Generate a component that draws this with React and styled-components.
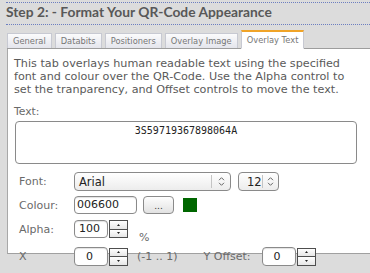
import React from "react";
import styled, { createGlobalStyle } from "styled-components";

const GlobalStyle = createGlobalStyle`
  body {
    margin: 0;
    background: #dcdcdc;
    font-family: "DejaVu Sans", Verdana, sans-serif;
  }
`;

const Page = styled.div`
  width: 370px;
  height: 273px;
  overflow: hidden;
  padding-top: 2px;
  box-sizing: border-box;
`;

const Header = styled.h2`
  margin: 0 0 0 6px;
  height: 21px;
  line-height: 22px;
  border-top: 1px dotted #6d7fc0;
  border-bottom: 1px dotted #6d7fc0;
  font: bold 13.8px Lato, "DejaVu Sans", sans-serif;
  color: #585858;
  white-space: nowrap;
`;

const TabBar = styled.div`
  display: flex;
  align-items: flex-end;
  gap: 3px;
  margin: 7px 0 0 7px;
  height: 16px;
  border-bottom: 1px solid #9d9d9d;
`;

const Tab = styled.div`
  height: ${(p) => (p.$active ? "16px" : "14px")};
  line-height: ${(p) => (p.$active ? "16px" : "14px")};
  padding: 0 5px;
  border: 1px solid #c7c9d2;
  border-top: ${(p) => (p.$active ? "2px solid #f0a428" : "1px solid #c7c9d2")};
  border-bottom: ${(p) => (p.$active ? "1px solid #fff" : "none")};
  margin-bottom: ${(p) => (p.$active ? "-1px" : "0")};
  background: ${(p) =>
    p.$active ? "#fff" : "linear-gradient(#fbfbfc, #e4e5ec)"};
  font-size: 8.3px;
  color: #777;
  white-space: nowrap;
`;

const Panel = styled.div`
  margin-left: 7px;
  height: 205px;
  box-sizing: border-box;
  padding: 8px 10px 0 6px;
  background: #fff;
  border-left: 1px solid #a8a8a8;
  border-bottom: 1px solid #a0a0a0;
`;

const Intro = styled.p`
  margin: 0 0 9px;
  font-size: 11.2px;
  line-height: 13px;
  color: #5a5a5a;
`;

const FieldLabel = styled.div`
  font-size: 10.8px;
  line-height: 13px;
  color: #6a6a6a;
`;

const TextBox = styled.div`
  margin: 3px 0 0 1px;
  width: 342px;
  height: 43px;
  box-sizing: border-box;
  padding-top: 3px;
  border: 1px solid #8a8a8a;
  border-radius: 4px;
  font: 10px "DejaVu Sans Mono", monospace;
  color: #222;
  text-align: center;
`;

const Row = styled.div`
  display: flex;
  align-items: center;
  height: ${(p) => p.$h}px;
  margin-top: ${(p) => p.$top}px;
`;

const Label = styled.span`
  width: 55px;
  padding-left: 5px;
  flex-shrink: 0;
  font-size: 11px;
  color: #6a6a6a;
`;

const Note = styled.span`
  margin-left: ${(p) => p.$left}px;
  font-size: 11px;
  color: #6a6a6a;
  align-self: ${(p) => (p.$low ? "flex-end" : "center")};
  margin-bottom: ${(p) => (p.$low ? "-6px" : "0")};
  white-space: nowrap;
`;

const Select = styled.div`
  display: flex;
  align-items: center;
  width: ${(p) => p.$w}px;
  height: 19px;
  box-sizing: border-box;
  margin-left: ${(p) => p.$left || 0}px;
  border: 1px solid #8a8a8a;
  border-radius: 4px;
  background: linear-gradient(#ffffff, #ececec);
  font-size: 11.5px;
  color: #222;
`;

const SelectValue = styled.span`
  flex: 1;
  padding-left: ${(p) => p.$pad}px;
`;

const SelectArrow = styled.span`
  display: flex;
  align-items: center;
  justify-content: center;
  width: ${(p) => p.$w}px;
  height: 13px;
  border-left: 1px solid #c4c4c4;
`;

const Input = styled.div`
  width: ${(p) => p.$w}px;
  height: ${(p) => p.$h || 18}px;
  box-sizing: border-box;
  margin-left: ${(p) => p.$left || 0}px;
  padding: ${(p) => (p.$center ? "0 3px 0 0" : "0 0 0 2px")};
  border: 1px solid #8a8a8a;
  border-radius: 4px;
  background: #fff;
  box-shadow: inset 0 1px 1px rgba(0, 0, 0, 0.12);
  font-size: 11px;
  line-height: ${(p) => (p.$h || 18) - 2}px;
  color: #222;
  text-align: ${(p) => (p.$center ? "center" : "left")};
`;

const PickButton = styled.div`
  width: 31px;
  height: 18px;
  box-sizing: border-box;
  margin-left: 6px;
  border: 1px solid #8a8a8a;
  border-radius: 4px;
  background: linear-gradient(#fdfdfd, #e2e2e2);
  font-size: 9px;
  line-height: 18px;
  color: #333;
  text-align: center;
`;

const Swatch = styled.div`
  width: 14px;
  height: 14px;
  margin-left: 9px;
  background: ${(p) => p.$color};
`;

const Spinner = styled.div`
  display: flex;
  flex-direction: column;
  width: 19px;
  height: 18px;
  margin-left: 1px;
`;

const SpinButton = styled.div`
  flex: 1;
  display: flex;
  align-items: center;
  justify-content: center;
  border: 1px solid #4e4e4e;
  background: linear-gradient(#ffffff, #e6e6e6);
  & + & {
    border-top: none;
  }
`;

const Chevrons = () => (
  <svg width="7" height="11" viewBox="0 0 7 11">
    <path d="M1 4.2 L3.5 1.7 L6 4.2 M1 6.8 L3.5 9.3 L6 6.8" fill="none" stroke="#666" strokeWidth="1" />
  </svg>
);

const Tri = ({ down }) => (
  <svg width="3" height="2" viewBox="0 0 3 2">
    <path d={down ? "M0 0 H3 L1.5 2 Z" : "M0 2 H3 L1.5 0 Z"} fill="#222" />
  </svg>
);

const Spin = () => (
  <Spinner>
    <SpinButton>
      <Tri />
    </SpinButton>
    <SpinButton>
      <Tri down />
    </SpinButton>
  </Spinner>
);

const tabs = ["General", "Databits", "Positioners", "Overlay Image", "Overlay Text"];

export default function App() {
  return (
    <Page>
      <GlobalStyle />
      <Header>Step 2: - Format Your QR-Code Appearance</Header>
      <TabBar>
        {tabs.map((t) => (
          <Tab key={t} $active={t === "Overlay Text"}>
            {t}
          </Tab>
        ))}
      </TabBar>
      <Panel>
        <Intro>
          This tab overlays human readable text using the specified font and
          colour over the QR-Code. Use the Alpha control to set the
          tranparency, and Offset controls to move the text.
        </Intro>
        <FieldLabel>Text:</FieldLabel>
        <TextBox>3S59719367898064A</TextBox>

        <Row $h={19} $top={8}>
          <Label>Font:</Label>
          <Select $w={157}>
            <SelectValue $pad={4}>Arial</SelectValue>
            <SelectArrow $w={18}>
              <Chevrons />
            </SelectArrow>
          </Select>
          <Select $w={41} $left={7}>
            <SelectValue $pad={8}>12</SelectValue>
            <SelectArrow $w={16}>
              <Chevrons />
            </SelectArrow>
          </Select>
        </Row>

        <Row $h={18} $top={5}>
          <Label>Colour:</Label>
          <Input $w={63}>006600</Input>
          <PickButton>...</PickButton>
          <Swatch $color="#006600" />
        </Row>

        <Row $h={18} $top={6}>
          <Label>Alpha:</Label>
          <Input $w={34} $center>
            100
          </Input>
          <Spin />
          <Note $left={11} $low>
            %
          </Note>
        </Row>

        <Row $h={19} $top={9}>
          <Label>X</Label>
          <Input $w={34} $h={19} $center>
            0
          </Input>
          <Spin />
          <Note $left={9}>(-1 .. 1)</Note>
          <Note $left={26}>Y Offset:</Note>
          <Input $w={34} $h={19} $left={11} $center>
            0
          </Input>
          <Spin />
        </Row>
      </Panel>
    </Page>
  );
}
